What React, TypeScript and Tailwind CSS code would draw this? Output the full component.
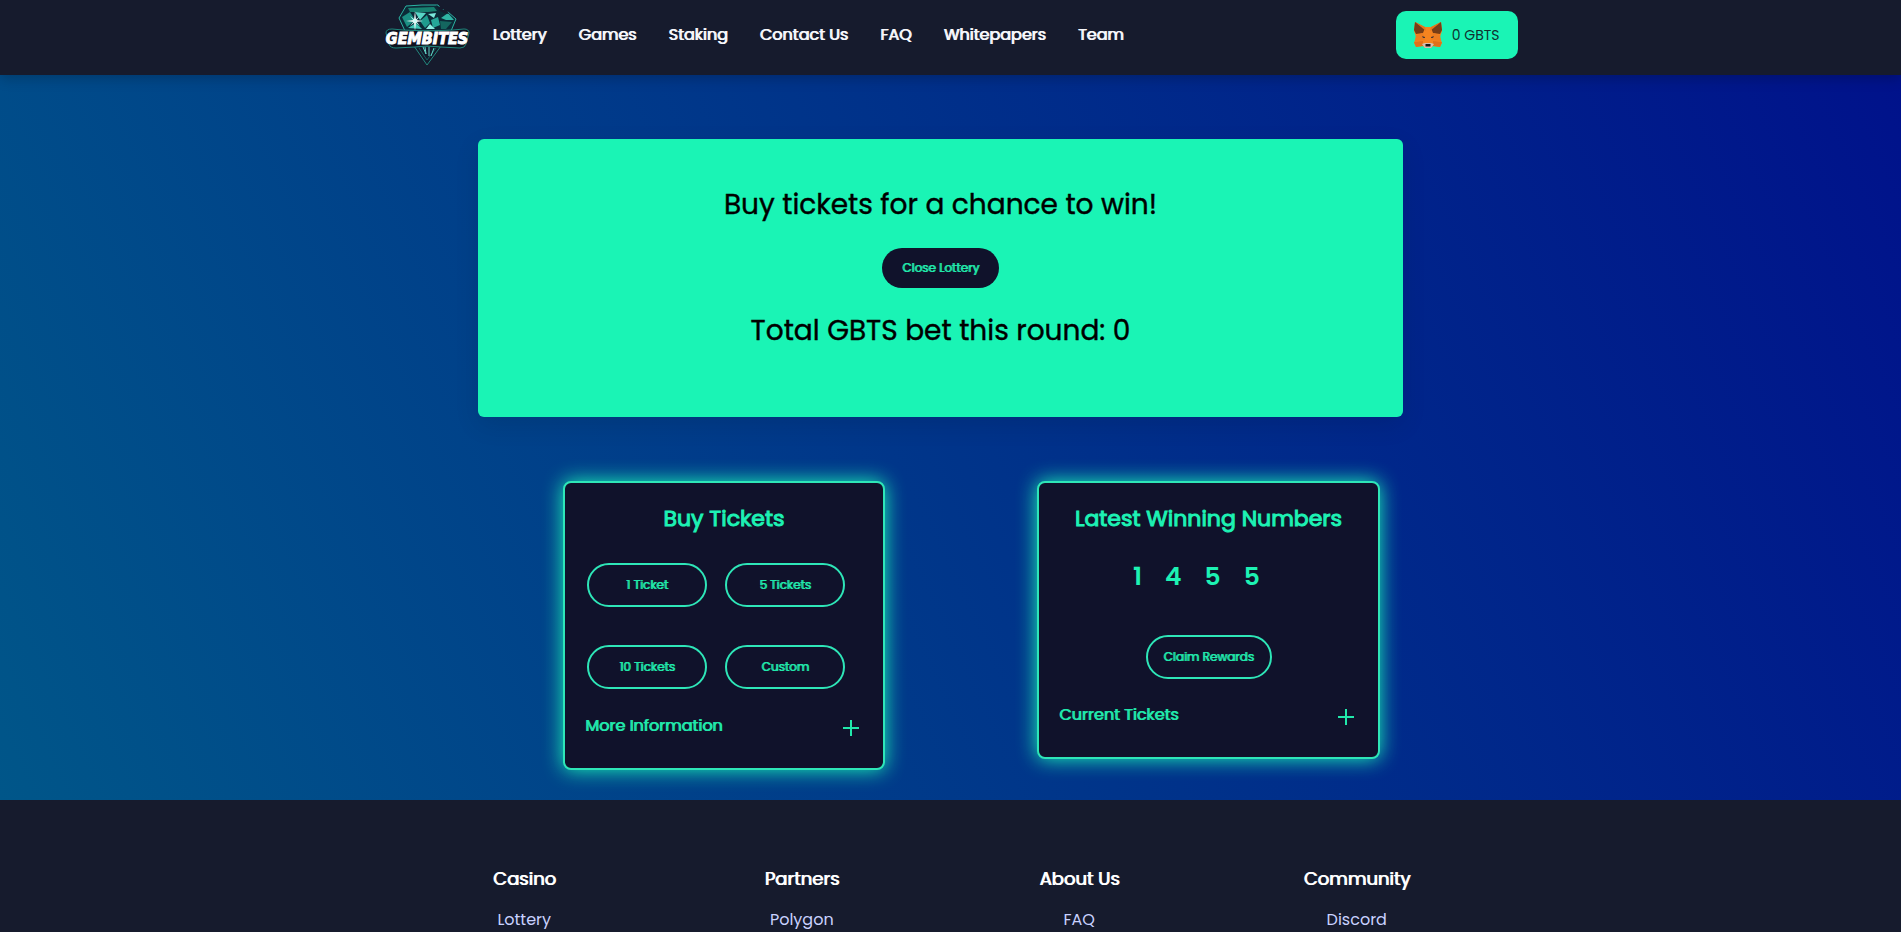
import type { ReactNode } from "react";

const navLinks = ["Lottery", "Games", "Staking", "Contact Us", "FAQ", "Whitepapers", "Team"];

const footerColumns = [
  { title: "Casino", links: ["Lottery"] },
  { title: "Partners", links: ["Polygon"] },
  { title: "About Us", links: ["FAQ"] },
  { title: "Community", links: ["Discord"] },
];

const ticketOptions = ["1 Ticket", "5 Tickets", "10 Tickets", "Custom"];
const winningNumbers = [1, 4, 5, 5];

function Logo() {
  return (
    <svg viewBox="15 3 86 64" className="h-16 w-[86px]" role="img" aria-label="Gembites">
      <path d="M36 6 52 5 68 5 71 9 78 12 86 19 81 31 35 31 29 18Z" fill="#0c2a37" stroke="#2bb3a3" strokeWidth="1" />
      <path d="M38 8 64 7 67 11 58 12 40 12Z" fill="#17806f" />
      <path d="M32 17 40 12 45 20 37 27Z" fill="#1b8f83" />
      <path d="M45 12 56 13 50 20Z" fill="#58d6c6" />
      <path d="M50 21 57 15 60 23 55 28Z" fill="#1f9c8e" />
      <path d="M58 14 66 13 64 18Z" fill="#7be8db" />
      <path d="M61 20 68 17 70 25 63 28Z" fill="#24a698" />
      <path d="M71 18 78 13 84 20 76 20Z" fill="#2fb4a4" />
      <path d="M70 21 82 22 76 29 71 29Z" fill="#14665f" />
      <path d="M38 28 46 23 52 29Z" fill="#3fc5b5" />
      <path d="M56 29 60 24 65 29Z" fill="#8cf0e4" />
      <path d="M66 5 69 7 72 6 73 10 77 10 79 14 74 13 70 11Z" fill="#161b2d" />
      <path d="M45 11 46 20 53 21 46 22 45 31 44 22 36 21 44 20Z" fill="#fff" />
      <path d="m40 16 5 4 5-4-4 5 4 5-5-4-5 4 4-5Z" fill="#c9fff8" />
      <path d="M44 46 57 65 71 46Z" fill="#131a2b" stroke="#23897f" strokeWidth="1" />
      <path d="M49 48 57 60 66 48" fill="none" stroke="#175f5c" strokeWidth="1" />
      <path d="m53 47 3 7-1-7m4 0v9m5-8-3 8" fill="none" stroke="#64d5c8" strokeWidth="1" />
      <path d="M22 29Q16 29 16 33L19 44Q20 48 26 48L45 47 57 46 71 47 90 48Q95 48 96 44L99 33Q99 29 94 29L83 30 58 31 33 30Z" fill="#10121f" stroke="#1f877d" strokeWidth="1" />
      <text x="57" y="44" textAnchor="middle" fill="#fff" stroke="#fff" strokeWidth="1" fontSize="16" fontWeight="700" fontStyle="italic" fontFamily="'DejaVu Sans Condensed', 'DejaVu Sans', sans-serif">
        GEMBITES
      </text>
    </svg>
  );
}

function Fox() {
  return (
    <svg viewBox="0 0 28 26" className="h-[26px] w-7 shrink-0" aria-hidden="true">
      <path d="M1 0 11 5H17L27 0 28 9 26 15 28 21 26 25 19 24 17 26H11L9 24 2 25 0 21 2 15 0 9Z" fill="#f5841f" />
      <path d="M1 0 11 6 9 11 2 12 0 8Z" fill="#763d16" />
      <path d="M27 0 17 6 19 11 26 12 28 8Z" fill="#763d16" />
      <path d="M1 0 11 5 12 9Z" fill="#e2761b" />
      <path d="M27 0 17 5 16 9Z" fill="#e2761b" />
      <path d="M2 13 9 11 11 18 1 19Z" fill="#ec7d20" />
      <path d="M26 13 19 11 17 18 27 19Z" fill="#ec7d20" />
      <path d="M0 20 9 19 9 24 2 25Z" fill="#e0701a" />
      <path d="M28 20 19 19 19 24 26 25Z" fill="#e0701a" />
      <path d="M8 14 11 15 11 16 9 16Z" fill="#4a3a35" />
      <path d="M20 14 17 15 17 16 19 16Z" fill="#4a3a35" />
      <path d="M8 22 11 21H17L20 22 17 26H11Z" fill="#d5bfb2" />
      <path d="M11.500 22H16.500V24.500H11.500Z" fill="#161616" />
    </svg>
  );
}

function Pill({ children, className }: { children: ReactNode; className: string }) {
  return (
    <button type="button" className={`h-11 rounded-full border-2 border-[#2ee6b8] text-xs text-[#21e8ab] [text-shadow:1px_0_currentColor] ${className}`}>
      {children}
    </button>
  );
}

function Card({ title, more, className, children }: { title: string; more: string; className: string; children: ReactNode }) {
  return (
    <section className={`rounded-lg border-2 border-[#2ee6b8] bg-[#10122b] px-5 pt-[18px] text-[#1df2b4] shadow-[0_0_20px_#1bf5b6] ${className}`}>
      <h2 className="text-center text-[22px] leading-9 [-webkit-text-stroke:1px]">{title}</h2>
      {children}
      <button type="button" className="flex w-full items-center justify-between pr-1 text-left text-base leading-6 text-[#21e8ab]">
        <span className="[text-shadow:1px_0_currentColor]">{more}</span>
        <svg viewBox="0 0 16 16" className="mt-1 h-4 w-4 shrink-0" aria-hidden="true">
          <path d="M8 0V16M0 8H16" stroke="currentColor" strokeWidth="2" />
        </svg>
      </button>
    </section>
  );
}

export default function App() {
  return (
    <div className="flex min-h-screen flex-col bg-[#161b2d] font-['Poppins','Inter',sans-serif]">
      <header className="relative bg-[#161b2d] shadow-[0_4px_12px_rgba(0,0,0,0.2)]">
        <div className="mx-auto flex h-[75px] max-w-[1134px] items-start justify-between">
          <nav className="flex items-start" aria-label="Main">
            <a href="#home" className="mt-[3px] mr-1.5 ml-px block">
              <Logo />
            </a>
            <ul className="flex">
              {navLinks.map((label) => (
                <li key={label}>
                  <a href="#nav" className="block px-4 pt-[23px] text-base leading-6 text-[#f7f8fc] [text-shadow:1px_0_currentColor]">
                    {label}
                  </a>
                </li>
              ))}
            </ul>
          </nav>
          <button type="button" className="mt-[11px] flex h-12 items-center gap-2.5 rounded-[10px] bg-[#1af4b5] px-[18px] text-sm whitespace-nowrap text-[#10302f]">
            <Fox />
            <span>0 GBTS</span>
          </button>
        </div>
      </header>

      <main className="bg-[linear-gradient(65deg,#005689,#00128b)] pt-16 pr-5 pb-[30px]">
        <div className="mx-auto max-w-[925px]">
          <section className="flex min-h-[278px] flex-col items-center rounded-md bg-[#1af4b5] pt-[46px] text-black shadow-[0_8px_24px_rgba(0,0,0,0.1)]">
            <h1 className="text-[28px] leading-10 [-webkit-text-stroke:0.4px]">Buy tickets for a chance to win!</h1>
            <button type="button" className="my-[23px] h-10 rounded-full bg-[#10122b] px-5 text-xs text-[#21e8ab] [text-shadow:1px_0_currentColor]">
              Close Lottery
            </button>
            <p className="text-[28px] leading-10 [-webkit-text-stroke:0.4px]">Total GBTS bet this round: 0</p>
          </section>

          <div className="mt-16 flex items-start justify-between pr-[23px] pl-[85px]">
            <Card title="Buy Tickets" more="More Information" className="w-[322px] pb-[30px]">
              <div className="mt-[26px] mb-[25px] ml-0.5 grid grid-cols-[120px_120px] gap-x-[18px] gap-y-[38px]">
                {ticketOptions.map((label) => (
                  <Pill key={label} className="w-full">
                    {label}
                  </Pill>
                ))}
              </div>
            </Card>
            <Card title="Latest Winning Numbers" more="Current Tickets" className="w-[343px] pb-[30px]">
              <ol className="mt-[22px] flex gap-[23px] pl-[74px] text-[25px] leading-9 font-semibold">
                {winningNumbers.map((n, i) => (
                  <li key={i}>{n}</li>
                ))}
              </ol>
              <div className="mt-10 mb-6 flex justify-center">
                <Pill className="w-[126px]">Claim Rewards</Pill>
              </div>
            </Card>
          </div>
        </div>
      </main>

      <footer className="grow bg-[#161b2d] pt-[63px] pr-5">
        <div className="mx-auto grid max-w-[1110px] grid-cols-4 text-center">
          {footerColumns.map((column) => (
            <div key={column.title}>
              <h2 className="text-lg leading-8 text-white [text-shadow:1px_0_currentColor]">{column.title}</h2>
              <ul className="mt-[13px]">
                {column.links.map((link) => (
                  <li key={link}>
                    <a href="#footer" className="text-base leading-6 text-[#c9d2ff]">
                      {link}
                    </a>
                  </li>
                ))}
              </ul>
            </div>
          ))}
        </div>
      </footer>
    </div>
  );
}
